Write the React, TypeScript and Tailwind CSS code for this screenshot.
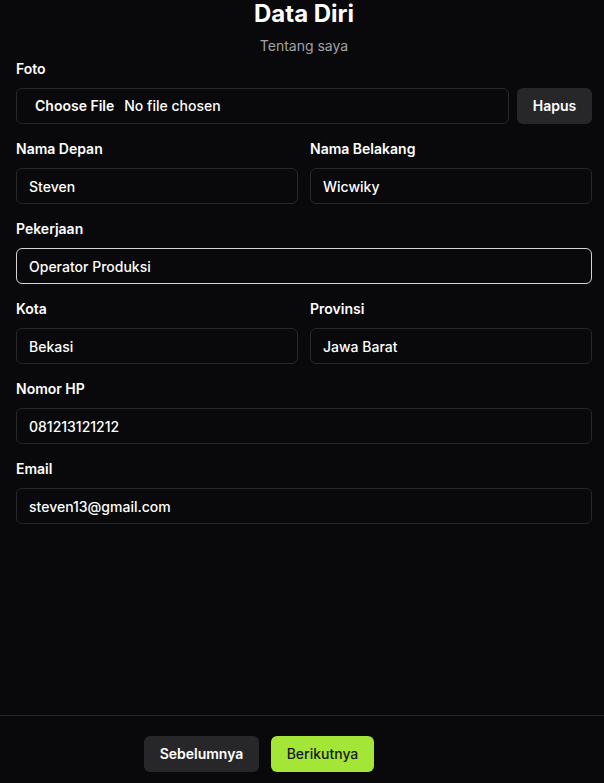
import { useState } from "react";

function Field({
  label,
  value,
  focused,
}: {
  label: string;
  value: string;
  focused?: boolean;
}) {
  const [val, setVal] = useState(value);
  return (
    <div className="flex flex-col">
      <label className="text-sm leading-5 font-semibold text-white">{label}</label>
      <input
        type="text"
        value={val}
        autoFocus={focused}
        onChange={(e) => setVal(e.target.value)}
        className={
          focused
            ? "mt-[9px] h-9 w-full rounded-md border border-[#d4d4d8] bg-transparent px-3 text-sm font-medium text-white outline-none"
            : "mt-[9px] h-9 w-full rounded-md border border-[#27272a] bg-transparent px-3 text-sm font-medium text-white outline-none"
        }
      />
    </div>
  );
}

export default function App() {
  return (
    <div
      className="flex h-[783px] flex-col bg-[#09090b] text-white"
      style={{ fontFamily: "Inter, 'Noto Sans', sans-serif" }}
    >
      <div className="flex-1 pl-4 pr-3">
        <h1 className="-mt-[2px] text-center text-2xl leading-8 font-bold">Data Diri</h1>
        <p className="mt-[6px] text-center text-sm leading-5 text-[#a1a1aa]">Tentang saya</p>

        <div className="mt-[3px] flex flex-col gap-[15px]">
          <div className="flex flex-col">
            <label className="text-sm leading-5 font-semibold">Foto</label>
            <div className="mt-[9px] flex gap-2">
              <div className="flex h-9 flex-1 items-center rounded-md border border-[#27272a] pl-[18px] text-sm">
                <span className="font-semibold">Choose File</span>
                <span className="ml-[10px] font-medium">No file chosen</span>
              </div>
              <button className="h-9 w-[75px] rounded-md bg-[#27272a] text-sm font-semibold">
                Hapus
              </button>
            </div>
          </div>

          <div className="grid grid-cols-2 gap-3">
            <Field label="Nama Depan" value="Steven" />
            <Field label="Nama Belakang" value="Wicwiky" />
          </div>

          <Field label="Pekerjaan" value="Operator Produksi" focused />

          <div className="grid grid-cols-2 gap-3">
            <Field label="Kota" value="Bekasi" />
            <Field label="Provinsi" value="Jawa Barat" />
          </div>

          <Field label="Nomor HP" value="081213121212" />
          <Field label="Email" value="steven13@gmail.com" />
        </div>
      </div>

      <div className="h-[68px] border-t border-[#27272a] pt-5 pl-[144px]">
        <div className="flex gap-3">
          <button className="h-9 w-[115px] rounded-md bg-[#27272a] text-sm font-semibold text-white">
            Sebelumnya
          </button>
          <button className="h-9 w-[103px] rounded-md bg-[#a3e635] text-sm font-medium text-[#18181b]">
            Berikutnya
          </button>
        </div>
      </div>
    </div>
  );
}
